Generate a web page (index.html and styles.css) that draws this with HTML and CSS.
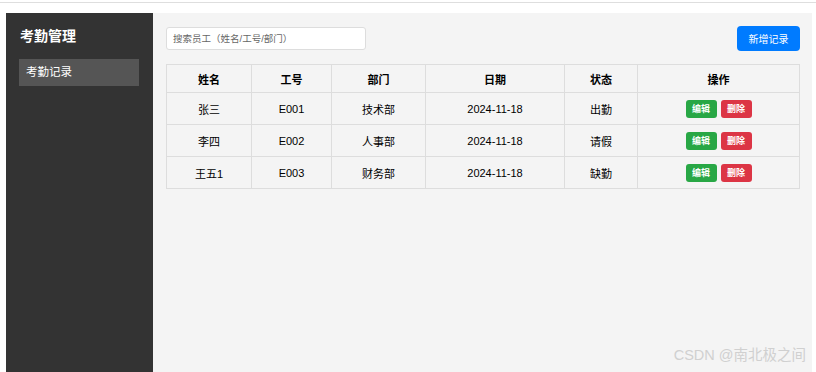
FILE: index.html
```html
<!DOCTYPE html>
<html>

<head>
	<meta charset="utf-8">
	<meta name="viewport" content="width=device-width, initial-scale=1">
	<title>考勤管理</title>
	<link rel="stylesheet" href="styles.css">
</head>

<body>
	<div class="topbar"></div>

	<div class="layout">
		<div class="sidebar">
			<h2>考勤管理</h2>
			<div class="menu-item">考勤记录</div>
		</div>

		<div class="main">
			<div class="toolbar">
				<input type="text" class="search" placeholder="搜索员工（姓名/工号/部门）">
				<button class="btn primary">新增记录</button>
			</div>

			<table class="records">
				<colgroup>
					<col style="width: 85px">
					<col style="width: 80px">
					<col style="width: 94px">
					<col style="width: 139px">
					<col style="width: 73px">
					<col>
				</colgroup>
				<thead>
					<tr>
						<th>姓名</th>
						<th>工号</th>
						<th>部门</th>
						<th>日期</th>
						<th>状态</th>
						<th>操作</th>
					</tr>
				</thead>
				<tbody>
					<tr>
						<td>张三</td>
						<td>E001</td>
						<td>技术部</td>
						<td>2024-11-18</td>
						<td>出勤</td>
						<td><button class="btn small green">编辑</button><button class="btn small red">删除</button></td>
					</tr>
					<tr>
						<td>李四</td>
						<td>E002</td>
						<td>人事部</td>
						<td>2024-11-18</td>
						<td>请假</td>
						<td><button class="btn small green">编辑</button><button class="btn small red">删除</button></td>
					</tr>
					<tr>
						<td>王五1</td>
						<td>E003</td>
						<td>财务部</td>
						<td>2024-11-18</td>
						<td>缺勤</td>
						<td><button class="btn small green">编辑</button><button class="btn small red">删除</button></td>
					</tr>
				</tbody>
			</table>

			<div class="watermark">CSDN @南北极之间</div>
		</div>
	</div>
</body>

</html>
```

FILE: styles.css
```css
html,
body {
	margin: 0;
	height: 100%;
}

body {
	background-color: white;
	font-family: "Liberation Sans", "Noto Sans CJK SC", sans-serif;
	display: flex;
	flex-direction: column;
}

.topbar {
	height: 13px;
	box-sizing: border-box;
	border-top: 2px solid white;
}

.topbar::before {
	content: "";
	display: block;
	height: 1px;
	background-color: #dedede;
}

.layout {
	flex: 1;
	display: flex;
	margin: 0 4px 0 6px;
}

.sidebar {
	width: 147px;
	background-color: #333;
	color: white;
	padding: 13px;
	box-sizing: border-box;
}

.sidebar h2 {
	margin: 0 0 13px 1px;
	font-size: 14px;
	line-height: 20px;
	font-weight: bold;
}

.menu-item {
	background-color: #555;
	height: 27px;
	line-height: 27px;
	padding-left: 7px;
	font-size: 11.5px;
	width: 120px;
	box-sizing: border-box;
}

.main {
	flex: 1;
	background-color: #f4f4f4;
	padding: 13px 12px 13px 13px;
	position: relative;
}

.toolbar {
	display: flex;
	justify-content: space-between;
	align-items: center;
	margin-bottom: 13px;
}

.search {
	width: 200px;
	height: 23px;
	box-sizing: border-box;
	border: 1px solid #ddd;
	border-radius: 3px;
	padding: 0 6px;
	font-size: 9.5px;
	font-family: inherit;
	background-color: white;
}

.search::placeholder {
	color: #666;
}

.btn {
	border: none;
	color: white;
	font-family: inherit;
	cursor: pointer;
}

.btn.primary {
	background-color: #007bff;
	border-radius: 4px;
	width: 63px;
	height: 25px;
	font-size: 10px;
}

.btn.small {
	width: 31px;
	height: 18px;
	padding: 0;
	border-radius: 3px;
	font-size: 9px;
	font-weight: bold;
	margin: 0 2px;
	vertical-align: middle;
}

.btn.green {
	background-color: #28a745;
}

.btn.red {
	background-color: #dc3545;
}

.records {
	width: 100%;
	border-collapse: collapse;
	font-size: 11px;
	color: black;
}

.records th,
.records td {
	border: 1px solid #ddd;
	text-align: center;
	padding: 0;
}

.records th {
	height: 27px;
	font-weight: bold;
}

.records td {
	height: 31px;
}

.watermark {
	position: absolute;
	right: 6px;
	bottom: 8px;
	font-size: 14.5px;
	color: #d0d0d0;
}
```
